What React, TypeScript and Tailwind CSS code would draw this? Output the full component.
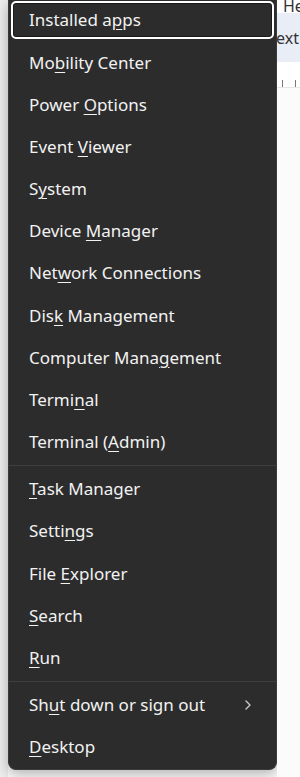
const groups: { label: string; key: number; arrow?: boolean }[][] = [
    [
        { label: "Installed apps", key: 11 },
        { label: "Mobility Center", key: 2 },
        { label: "Power Options", key: 6 },
        { label: "Event Viewer", key: 6 },
        { label: "System", key: 1 },
        { label: "Device Manager", key: 7 },
        { label: "Network Connections", key: 3 },
        { label: "Disk Management", key: 3 },
        { label: "Computer Management", key: 13 },
        { label: "Terminal", key: 5 },
        { label: "Terminal (Admin)", key: 10 },
    ],
    [
        { label: "Task Manager", key: 0 },
        { label: "Settings", key: 5 },
        { label: "File Explorer", key: 5 },
        { label: "Search", key: 0 },
        { label: "Run", key: 0 },
    ],
    [
        { label: "Shut down or sign out", key: 2, arrow: true },
        { label: "Desktop", key: 0 },
    ],
]

const Label = ({ text, at }: { text: string; at: number }) => (
    <span>
        {text.slice(0, at)}
        <span className="underline decoration-1 underline-offset-[3px]">{text[at]}</span>
        {text.slice(at + 1)}
    </span>
)

const App = () => {
    return (
        <div className="w-[300px] h-[777px] flex overflow-hidden bg-[#fbfbfb] font-['Noto_Sans',sans-serif]">
            <div className="w-[8px] shrink-0 bg-[#eeeeee]"></div>

            <div className="w-[269px] shrink-0 self-start mt-[-1px] pb-[1px] bg-[#2c2c2c] border-x border-b border-[#3a3a3a] rounded-b-[8px] shadow-[0_4px_14px_rgba(0,0,0,0.3)] text-[#f2f2f2] text-[17px]">
                {groups.map((group, g) => (
                    <div key={g}>
                        {g > 0 && (
                            <div className="h-[4.8px] flex items-center">
                                <div className="w-full h-px bg-[#3f3f3f]"></div>
                            </div>
                        )}
                        {group.map((item, i) => (
                            <div key={item.label} className="h-[42.2px] p-[2px]">
                                {g === 0 && i === 0 ? (
                                    <div className="h-full rounded-[5px] border-2 border-white shadow-[inset_0_0_0_1px_#1a1a1a] flex items-center pl-[16px]">
                                        <Label text={item.label} at={item.key} />
                                    </div>
                                ) : (
                                    <div className="h-full flex items-center pl-[18px] pr-[22px]">
                                        <Label text={item.label} at={item.key} />
                                        {item.arrow && (
                                            <svg className="ml-auto" width="8" height="12" viewBox="0 0 8 12" fill="none">
                                                <path d="M2 2l4 4-4 4" stroke="#c8c8c8" strokeWidth="1.4" strokeLinecap="round" strokeLinejoin="round" />
                                            </svg>
                                        )}
                                    </div>
                                )}
                            </div>
                        ))}
                    </div>
                ))}
            </div>

            <div className="flex-1 flex flex-col overflow-hidden text-[16px] text-[#333]">
                <div className="h-[13px] bg-white pl-[6px] leading-[12px] overflow-hidden">He</div>
                <div className="h-[49px] bg-[#e9edf6] flex items-center -ml-[1px]">ext</div>
                <div className="h-[26px] bg-white flex items-end gap-[12px] pl-[5px] border-b border-[#e6e6e6]">
                    <div className="w-px h-[7px] bg-[#777]"></div>
                    <div className="w-px h-[7px] bg-[#777]"></div>
                </div>
                <div className="flex-1 bg-[#fbfbfb]"></div>
            </div>
        </div>
    )
}

export default App
